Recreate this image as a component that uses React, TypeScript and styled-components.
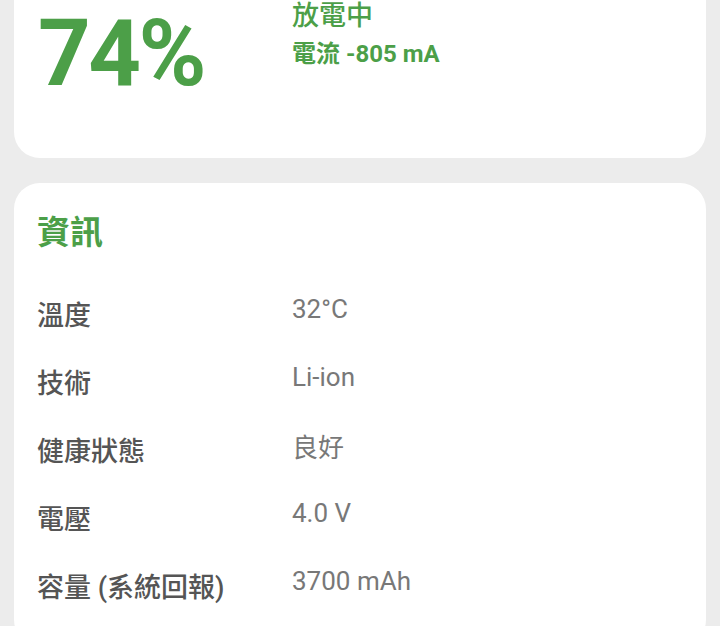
import styled, { createGlobalStyle } from 'styled-components'

const GlobalStyle = createGlobalStyle`
  html, body {
    margin: 0;
    padding: 0;
    background: #ececec;
    overflow: hidden;
  }
  body {
    font-family: Roboto, "Noto Sans CJK TC", sans-serif;
  }
`

const GREEN = '#4c9f48'

const Page = styled.div`
  display: flex;
  flex-direction: column;
  gap: 25px;
  padding: 0 14px;
  margin-top: -40px;
`

const Card = styled.div`
  background: #ffffff;
  border-radius: 26px;
`

const SummaryCard = styled(Card)`
  display: grid;
  grid-template-columns: 254px 1fr;
  align-items: start;
  padding: 40px 24px 0 24px;
  height: 158px;
`

const Percent = styled.div`
  font-family: Roboto, sans-serif;
  font-weight: 700;
  font-size: 92px;
  line-height: 70px;
  letter-spacing: -2.5px;
  color: ${GREEN};
  margin-top: 19px;
`

const Status = styled.div`
  display: flex;
  flex-direction: column;
  gap: 8px;
  color: ${GREEN};
`

const StatusTitle = styled.div`
  font-size: 27px;
  line-height: 32px;
  font-weight: 500;
`

const StatusSub = styled.div`
  font-size: 24px;
  line-height: 28px;
  font-weight: 700;
`

const InfoCard = styled(Card)`
  padding: 30px 23px 40px 23px;
`

const Title = styled.h2`
  margin: 0 0 43px 0;
  font-size: 33px;
  line-height: 40px;
  font-weight: 700;
  color: ${GREEN};
`

const Rows = styled.div`
  display: flex;
  flex-direction: column;
  gap: 30px;
`

const Row = styled.div`
  display: grid;
  grid-template-columns: 255px 1fr;
  align-items: center;
  height: 38px;
`

const Label = styled.div`
  font-size: 27px;
  font-weight: 500;
  color: #555555;
  margin-top: -4px;
`

const Value = styled.div`
  font-size: 26px;
  color: #787878;
  margin-top: -12px;
`

const info: [string, string][] = [
  ['溫度', '32°C'],
  ['技術', 'Li-ion'],
  ['健康狀態', '良好'],
  ['電壓', '4.0 V'],
  ['容量 (系統回報)', '3700 mAh'],
]

export default function App() {
  return (
    <>
      <GlobalStyle />
      <Page>
        <SummaryCard>
          <Percent>74%</Percent>
          <Status>
            <StatusTitle>放電中</StatusTitle>
            <StatusSub>電流 -805 mA</StatusSub>
          </Status>
        </SummaryCard>
        <InfoCard>
          <Title>資訊</Title>
          <Rows>
            {info.map(([label, value]) => (
              <Row key={label}>
                <Label>{label}</Label>
                <Value>{value}</Value>
              </Row>
            ))}
          </Rows>
        </InfoCard>
      </Page>
    </>
  )
}
